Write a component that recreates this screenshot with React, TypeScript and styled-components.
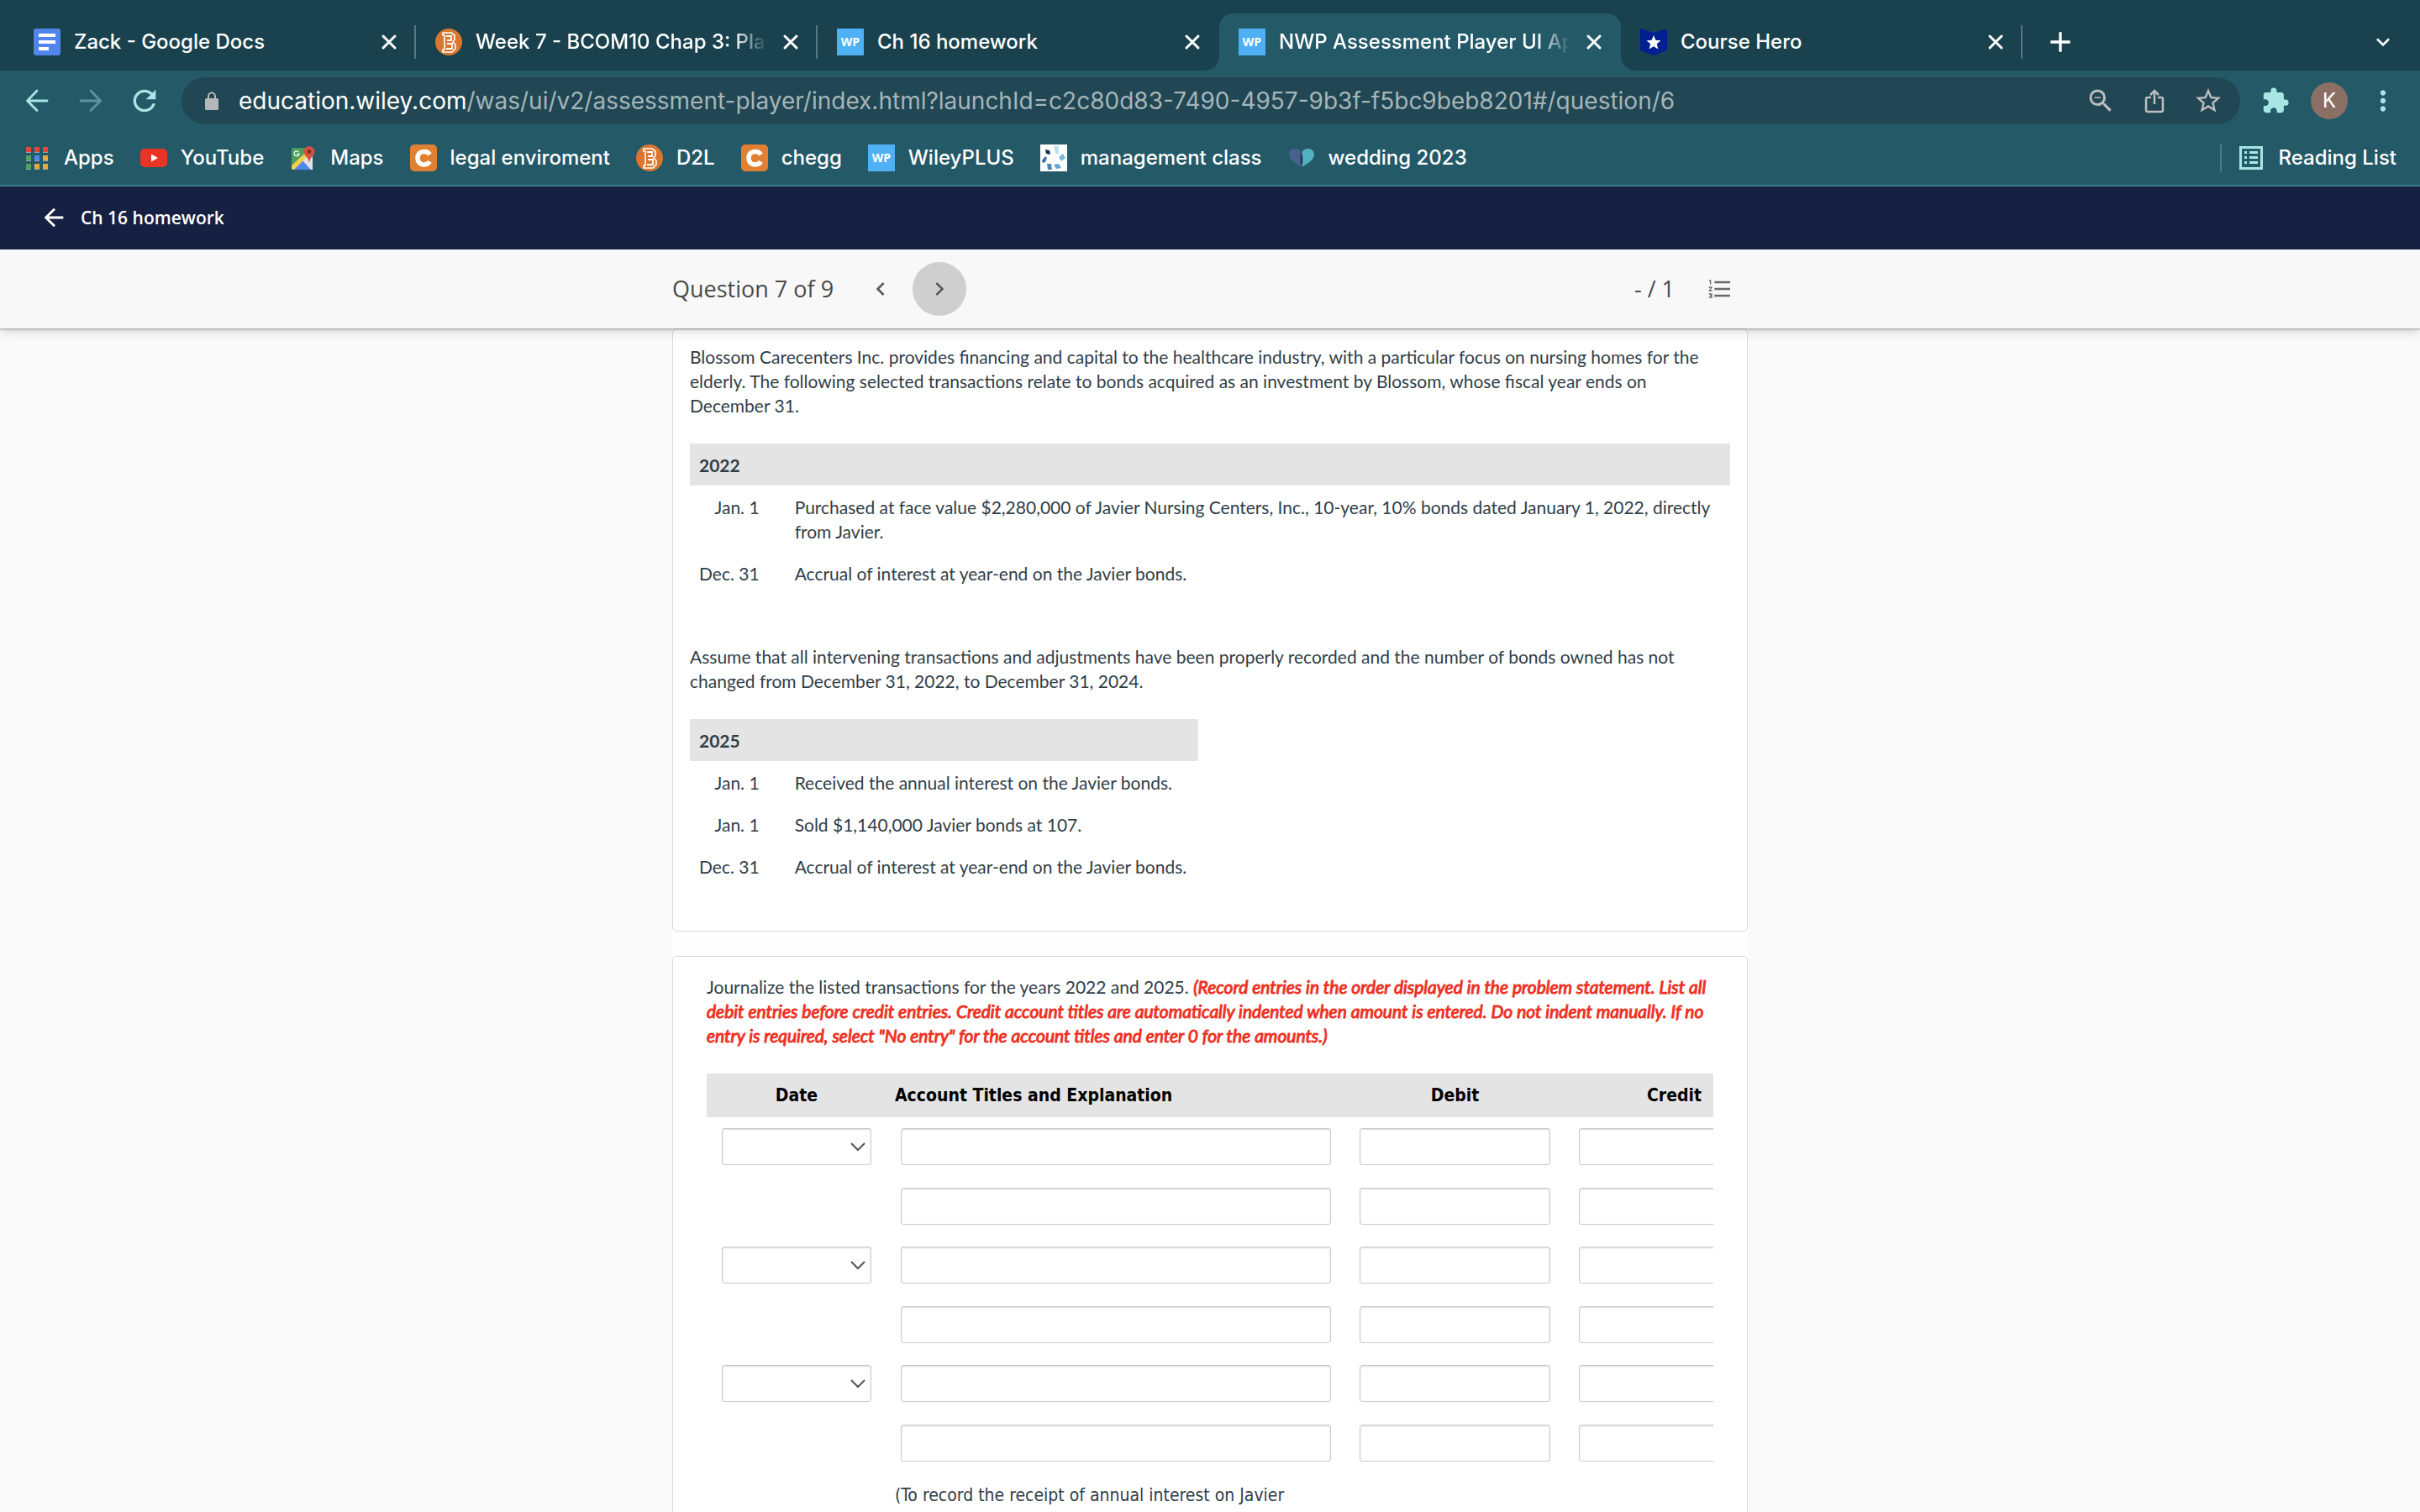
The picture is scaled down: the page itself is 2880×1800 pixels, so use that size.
import React from "react";
import styled, { createGlobalStyle, css } from "styled-components";
import {
  MdArrowBack, MdRefresh, MdZoomOut, MdStarOutline, MdExtension, MdMoreVert,
  MdFormatListNumbered, MdAdd, MdExpandMore, MdChevronLeft, MdChevronRight,
} from "react-icons/md";

const UI = `Inter, "Liberation Sans", sans-serif`;
const BODY = `Lato, "Liberation Sans", sans-serif`;
const OPEN = `"Open Sans", "Noto Sans", sans-serif`;
const TABLE = `"DejaVu Sans Condensed", "DejaVu Sans", sans-serif`;

const Global = createGlobalStyle`
  *, *::before, *::after { box-sizing: border-box; }
  body { margin: 0; background: #fafafa; }
  button, input, select { font: inherit; margin: 0; }
  p { margin: 0; }
`;

const Window = styled.div`
  display: flex;
  flex-direction: column;
  height: 100vh;
  overflow: hidden;
  background: #fafafa;
`;

/* ---------- browser chrome ---------- */

const TabStrip = styled.header`
  display: flex;
  align-items: flex-end;
  height: 84px;
  flex: none;
  padding: 0 28px 0 17px;
  background: #19424e;
  color: #fff;
  font: 500 24px/32px ${UI};
`;

const Tab = styled.div<{ $active?: boolean; $divider?: boolean }>`
  position: relative;
  display: flex;
  align-items: center;
  gap: 16px;
  width: 478px;
  height: 68px;
  padding: 0 20px 0 23px;
  border-radius: 16px 16px 0 0;
  background: ${(p) => (p.$active ? "#245968" : "transparent")};

  ${(p) =>
    p.$divider &&
    css`
      &::after {
        content: "";
        position: absolute;
        right: 0;
        top: 14px;
        width: 2px;
        height: 40px;
        background: #567680;
      }
    `}

  ${(p) =>
    p.$active &&
    css`
      &::before,
      &::after {
        content: "";
        position: absolute;
        bottom: 0;
        width: 16px;
        height: 16px;
      }
      &::before {
        left: -16px;
        background: radial-gradient(circle at 0 0, transparent 15px, #245968 16px);
      }
      &::after {
        right: -16px;
        background: radial-gradient(circle at 100% 0, transparent 15px, #245968 16px);
      }
    `}
`;

const TabTitle = styled.span<{ $long?: boolean }>`
  flex: 1;
  min-width: 0;
  overflow: hidden;
  white-space: nowrap;
  ${(p) =>
    p.$long &&
    css`
      mask-image: linear-gradient(to right, #000 calc(100% - 40px), transparent);
    `}
`;

const IconButton = styled.button<{ $size?: number; $color?: string }>`
  display: inline-flex;
  align-items: center;
  justify-content: center;
  flex: none;
  width: ${(p) => p.$size ?? 32}px;
  height: ${(p) => p.$size ?? 32}px;
  padding: 0;
  border: 0;
  border-radius: 50%;
  background: transparent;
  color: ${(p) => p.$color ?? "#fff"};
`;

const NewTab = styled.div`
  display: flex;
  align-items: center;
  justify-content: space-between;
  flex: 1;
  height: 68px;
  padding-left: 25px;
`;

const Toolbar = styled.nav`
  display: flex;
  align-items: center;
  flex: none;
  height: 72px;
  padding: 0 24px;
  background: #245968;
`;

const NavButtons = styled.div`
  display: flex;
  gap: 24px;
  padding-right: 24px;
`;

const AddressBar = styled.div`
  display: flex;
  align-items: center;
  flex: 1;
  min-width: 0;
  height: 56px;
  padding: 0 18px 0 24px;
  border-radius: 28px;
  background: #204753;
  color: #a5b5ba;
  font: 400 28px/36px ${UI};
`;

const Url = styled.span`
  flex: 1;
  min-width: 0;
  padding-left: 20px;
  overflow: hidden;
  white-space: nowrap;
  b { color: #fff; font-weight: 400; }
`;

const AddressActions = styled.div`
  display: flex;
  gap: 24px;
`;

const ToolbarEnd = styled.div`
  display: flex;
  align-items: center;
  gap: 22px;
  padding-left: 22px;
`;

const Avatar = styled.button`
  width: 44px;
  height: 44px;
  padding: 0;
  border: 0;
  border-radius: 50%;
  background: #8b6f65;
  color: #fff;
  font: 400 24px/44px ${UI};
`;

const Bookmarks = styled.nav`
  display: flex;
  align-items: center;
  gap: 31px;
  flex: none;
  height: 66px;
  padding: 0 28px;
  border-bottom: 2px solid #3f7d8a;
  background: #245968;
  font: 500 24px/32px ${UI};
`;

const Bookmark = styled.a`
  display: flex;
  align-items: center;
  gap: 16px;
  color: #fff;
  text-decoration: none;
  white-space: nowrap;
`;

const ReadingList = styled(Bookmark)`
  gap: 19px;
  margin-left: auto;
  height: 32px;
  padding-left: 21px;
  border-left: 2px solid #48808c;
`;

const Icon = styled.svg`
  display: block;
  flex: none;
`;

const DocsIcon = () => (
  <Icon width="32" height="32" viewBox="0 0 32 32">
    <rect width="32" height="32" rx="3" fill="#5086ec" />
    <path d="M6 6h20v4H6zM6 14h20v4H6zM6 22h12v4H6z" fill="#fff" />
  </Icon>
);

const BIcon = () => (
  <Icon width="32" height="32" viewBox="0 0 32 32">
    <circle cx="16" cy="16" r="16" fill="#d9772f" />
    <path d="M9 5h10l4 3v5l-2 3 3 3v5l-4 4H9v-3h2V8H9z" fill="none" stroke="#fff" strokeWidth="1.6" />
    <path d="M13 9h6v5h-5M14 18h6v6h-7" fill="none" stroke="#fff" strokeWidth="1.8" />
  </Icon>
);

const WpTile = styled.span`
  flex: none;
  width: 32px;
  height: 32px;
  background: #4fb0f5;
  color: #fff;
  font: 700 14px/32px ${OPEN};
  text-align: center;
`;

const HeroIcon = () => (
  <Icon width="32" height="32" viewBox="0 0 32 32">
    <path d="M0 0l16 5 16-5v26l-16 6-16-6z" fill="#001f91" />
    <path d="M16 8l2.400 5.800 6.100.5-4.700 4 1.500 6.200-5.300-3.300-5.300 3.300 1.500-6.200-4.700-4 6.100-.5z" fill="#fff" />
  </Icon>
);

const CloseIcon = () => (
  <Icon width="24" height="24" viewBox="0 0 24 24">
    <path d="M5 5l14 14M19 5L5 19" fill="none" stroke="currentColor" strokeWidth="3" strokeLinecap="round" />
  </Icon>
);

const BackIcon = () => (
  <Icon width="40" height="40" viewBox="0 0 40 40">
    <path d="M32 20H9M20 8L8.500 20 20 31.500" fill="none" stroke="currentColor" strokeWidth="2.800" strokeLinecap="round" strokeLinejoin="round" />
  </Icon>
);

const ForwardIcon = () => (
  <Icon width="40" height="40" viewBox="0 0 40 40">
    <path d="M8 20h23M20 8l11.500 12L20 31.500" fill="none" stroke="currentColor" strokeWidth="2.800" strokeLinecap="round" strokeLinejoin="round" />
  </Icon>
);

const LockIcon = () => (
  <Icon width="24" height="24" viewBox="0 0 24 24">
    <rect x="4" y="9" width="16" height="14" rx="1.500" fill="#b4b8bb" />
    <path d="M8 10V6.500a4 4 0 0 1 8 0V10" fill="none" stroke="#b4b8bb" strokeWidth="2" />
  </Icon>
);

const ShareIcon = () => (
  <Icon width="32" height="32" viewBox="0 0 32 32">
    <path d="M12 12H8a2 2 0 0 0-2 2v13a2 2 0 0 0 2 2h16a2 2 0 0 0 2-2V14a2 2 0 0 0-2-2h-4M16 20V5M11 9l5-5 5 5" fill="none" stroke="currentColor" strokeWidth="2.500" />
  </Icon>
);

const AppsIcon = () => (
  <Icon width="32" height="28" viewBox="0 0 32 28">
    {["#e2473d", "#e2473d", "#e2473d", "#55a05b", "#4a88ee", "#e9a83a", "#55a05b", "#e9a83a", "#e9a83a"].map((c, i) => (
      <g key={i}>
        <rect x={3 + (i % 3) * 10} y={Math.floor(i / 3) * 10 + 1} width="6" height="7" fill="#8fa5ac" />
        <rect x={3 + (i % 3) * 10} y={Math.floor(i / 3) * 10 + 1} width="6" height="6" fill={c} />
      </g>
    ))}
  </Icon>
);

const YouTubeIcon = () => (
  <Icon width="32" height="32" viewBox="0 0 32 32">
    <rect y="5" width="32" height="22" rx="5" fill="#e93323" />
    <path d="M13 11.500l8 4.500-8 4.500z" fill="#fff" />
  </Icon>
);

const MapsIcon = () => (
  <Icon width="32" height="30" viewBox="0 0 32 30">
    <path d="M4 3h23v24a2 2 0 0 1-2 2H4a2 2 0 0 1-2-2V5a2 2 0 0 1 2-2z" fill="#4d9d5b" />
    <path d="M14 17L27 8v21H10z" fill="#e2e4e6" />
    <path d="M5 29l10-11 10 11z" fill="#4f87ee" />
    <path d="M2 24L17 10l3 4L5 29H4a2 2 0 0 1-2-2z" fill="#f4cd4a" />
    <path d="M23 1a6.500 6.500 0 0 1 6.500 6.500C29.500 12 24 14 23 21c-1-7-6.500-9-6.500-13.500A6.500 6.500 0 0 1 23 1z" fill="#d8503f" />
    <circle cx="23" cy="7.500" r="2.400" fill="#7b2d24" />
    <path d="M10.500 8a3 3 0 1 0 .5 2.500H8.500" fill="none" stroke="#fff" strokeWidth="1.300" />
  </Icon>
);

const CheggIcon = () => (
  <Icon width="32" height="32" viewBox="0 0 32 32">
    <rect width="32" height="32" rx="5" fill="#e08030" />
    <path d="M23.500 12C22 9.500 20 8.500 17 8.500c-5 0-8 3-8 7.700s3 7.700 8 7.700c3 0 5-1 6.500-3.500" fill="none" stroke="#fff" strokeWidth="5.500" />
  </Icon>
);

const DotsIcon = () => (
  <Icon width="32" height="32" viewBox="0 0 32 32">
    <rect width="32" height="32" fill="#fff" />
    <path d="M16 2h6v9h-4z" fill="#bfe0f2" />
    <path d="M6 6l5 1 1 5-5-1z" fill="#16294f" />
    <path d="M22 15l5-4 3 5-5 4z" fill="#77b9df" />
    <path d="M2 19l4-5 2 2-2 5-3 1z" fill="#3f6fa8" />
    <path d="M8 23h5l1 7H9z" fill="#4d86b8" />
    <path d="M16 24l6-1 3 5-6 1z" fill="#5fa5d3" />
  </Icon>
);

const HeartIcon = () => (
  <Icon width="32" height="32" viewBox="0 0 32 32">
    <path d="M16 27C8 22 1 18 1 12c0-8 10-9 14-4 2 5 2 12 1 19z" fill="#44628a" />
    <path d="M16 27C16 20 15 13 17 8c4-5 14-4 14 4 0 6-7 10-15 15z" fill="#52b1bf" />
    <path d="M15 9c3 3 3 12 1 18-2-6-2-13-1-18z" fill="#22375c" />
  </Icon>
);

const ReadingIcon = () => (
  <Icon width="28" height="28" viewBox="0 0 28 28">
    <rect x="1.500" y="1.500" width="25" height="25" fill="none" stroke="#a8e6e6" strokeWidth="3" />
    <path d="M6 6h3v3H6zM12 6h10v3H12zM6 12h3v3H6zM12 12h10v3H12zM6 18h3v3H6zM12 18h10v3H12z" fill="#a8e6e6" />
  </Icon>
);

/* ---------- assessment page ---------- */

const CourseBar = styled.div`
  display: flex;
  align-items: center;
  flex: none;
  height: 75px;
  padding: 0 47px 2px;
  background: #162042;
`;

const CourseLink = styled.a`
  display: flex;
  align-items: center;
  gap: 15px;
  color: #fff;
  font: 600 21px/28px ${OPEN};
  text-decoration: none;
`;

const QuestionBar = styled.div`
  position: relative;
  z-index: 1;
  flex: none;
  height: 94px;
  background: #f8f8f8;
  box-shadow: 0 1px 2px rgba(0, 0, 0, 0.3), 0 3px 12px rgba(0, 0, 0, 0.18);
`;

const QuestionInner = styled.div`
  display: flex;
  align-items: center;
  max-width: 1280px;
  height: 100%;
  margin: 0 auto;
  padding-right: 9px;
  color: #4a4a4a;
  font: 400 27px/36px ${OPEN};
`;

const QuestionNav = styled.div`
  display: flex;
  gap: 6px;
  margin: 0 auto 0 24px;
`;

const RoundButton = styled(IconButton)`
  width: 64px;
  height: 64px;
  color: #5a5a5a;
  background: ${(p) => (p["aria-current"] ? "#cfcfcf" : "transparent")};
`;

const Score = styled.span`
  padding-right: 30px;
`;

const Content = styled.main`
  flex: 1;
  width: 100%;
  max-width: 1280px;
  margin: 0 auto;
  background: #fefefe;
  color: #303e48;
  font: 400 21px/29px ${BODY};
`;

const Card = styled.section<{ $inset: number }>`
  padding: ${(p) => `18px ${p.$inset}px 52px`};
  border: 1px solid #d8dada;
  border-radius: 5px;
  background: #fff;

  & + & { margin-top: 29px; padding-top: 21px; }
`;

const Events = styled.table`
  margin: 31px 0 60px;
  border-collapse: collapse;

  &:last-child { margin-bottom: 0; }
  th, td { padding: 11px 11px 10px; text-align: left; vertical-align: top; }
  thead th { background: #e4e4e4; font-weight: 700; }
  tbody th { width: 92px; font-weight: 400; text-align: right; white-space: nowrap; }
  td { padding-right: 14px; padding-left: 31px; }
`;

/* The regular italic is thickened by an outline, which keeps its narrow widths. */
const Hint = styled.em`
  color: #ee3124;
  -webkit-text-stroke: 1px #ee3124;
`;

const JournalScroll = styled.div`
  margin-top: 31px;
  overflow: hidden;
`;

const Journal = styled.table`
  width: 1282px;
  table-layout: fixed;
  border-collapse: collapse;
  font: 400 21px/28px ${TABLE};

  th, td { padding: 13px 17px 0; vertical-align: top; }
  th { height: 52px; padding: 12px 10px; background: #e4e4e4; color: #000; font-weight: 700; }
  th:nth-child(2) { text-align: left; }
  td { height: 70px; }
  td:first-child { padding: 13px 18px 0; }
  tr:nth-child(odd) td { height: 71px; }
  tr:last-child td { padding-left: 10px; }
`;

const fieldStyle = css`
  display: block;
  width: 100%;
  height: 44px;
  padding: 0 10px;
  border: 1px solid #c8cacb;
  border-radius: 3px;
  background: #fff;
  box-shadow: inset 0 1px 2px rgba(0, 0, 0, 0.14);
`;

const Field = styled.input`
  ${fieldStyle}
`;

const SelectWrap = styled.div`
  position: relative;
  svg { position: absolute; right: 7px; top: 17px; pointer-events: none; }
`;

const DateSelect = styled.select`
  ${fieldStyle}
  appearance: none;
`;

const tabs = [
  { icon: <DocsIcon />, title: "Zack - Google Docs", divider: true },
  { icon: <BIcon />, title: "Week 7 - BCOM10 Chap 3: Plan", divider: true, long: true },
  { icon: <WpTile>WP</WpTile>, title: "Ch 16 homework" },
  { icon: <WpTile>WP</WpTile>, title: "NWP Assessment Player UI App", active: true, long: true },
  { icon: <HeroIcon />, title: "Course Hero", divider: true },
];

const bookmarks = [
  { icon: <AppsIcon />, label: "Apps" },
  { icon: <YouTubeIcon />, label: "YouTube" },
  { icon: <MapsIcon />, label: "Maps" },
  { icon: <CheggIcon />, label: "legal enviroment" },
  { icon: <BIcon />, label: "D2L" },
  { icon: <CheggIcon />, label: "chegg" },
  { icon: <WpTile>WP</WpTile>, label: "WileyPLUS" },
  { icon: <DotsIcon />, label: "management class" },
  { icon: <HeartIcon />, label: "wedding 2023" },
];

function EventTable({ year, rows }: { year: string; rows: [string, string][] }) {
  return (
    <Events>
      <thead>
        <tr><th colSpan={2}>{year}</th></tr>
      </thead>
      <tbody>
        {rows.map(([date, text], i) => (
          <tr key={i}>
            <th scope="row">{date}</th>
            <td>{text}</td>
          </tr>
        ))}
      </tbody>
    </Events>
  );
}

export default function App() {
  return (
    <Window>
      <Global />
      <TabStrip>
        {tabs.map((t) => (
          <Tab key={t.title} $active={t.active} $divider={t.divider}>
            {t.icon}
            <TabTitle $long={t.long}>{t.title}</TabTitle>
            <IconButton $size={24} aria-label="Close tab"><CloseIcon /></IconButton>
          </Tab>
        ))}
        <NewTab>
          <IconButton $size={40} aria-label="New tab"><MdAdd size={40} /></IconButton>
          <IconButton aria-label="Search tabs"><MdExpandMore size={36} /></IconButton>
        </NewTab>
      </TabStrip>

      <Toolbar>
        <NavButtons>
          <IconButton $size={40} $color="#a8e6e6" aria-label="Back"><BackIcon /></IconButton>
          <IconButton $size={40} $color="#5f93a0" aria-label="Forward"><ForwardIcon /></IconButton>
          <IconButton $size={40} $color="#a8e6e6" aria-label="Reload"><MdRefresh size={40} /></IconButton>
        </NavButtons>
        <AddressBar>
          <LockIcon />
          <Url><b>education.wiley.com</b>/was/ui/v2/assessment-player/index.html?launchId=c2c80d83-7490-4957-9b3f-f5bc9beb8201#/question/6</Url>
          <AddressActions>
            <IconButton $size={40} $color="#bdbdbd" aria-label="Zoom out"><MdZoomOut size={36} /></IconButton>
            <IconButton $size={40} $color="#bdbdbd" aria-label="Share"><ShareIcon /></IconButton>
            <IconButton $size={40} $color="#bdbdbd" aria-label="Bookmark this page"><MdStarOutline size={36} /></IconButton>
          </AddressActions>
        </AddressBar>
        <ToolbarEnd>
          <IconButton $size={40} $color="#a8e6e6" aria-label="Extensions"><MdExtension size={34} /></IconButton>
          <Avatar>K</Avatar>
          <IconButton $size={40} $color="#a8e6e6" aria-label="Menu"><MdMoreVert size={38} /></IconButton>
        </ToolbarEnd>
      </Toolbar>

      <Bookmarks>
        {bookmarks.map((b) => (
          <Bookmark key={b.label} href="#">{b.icon}{b.label}</Bookmark>
        ))}
        <ReadingList href="#"><ReadingIcon />Reading List</ReadingList>
      </Bookmarks>

      <CourseBar>
        <CourseLink href="#"><MdArrowBack size={34} />Ch 16 homework</CourseLink>
      </CourseBar>

      <QuestionBar>
        <QuestionInner>
          <span>Question 7 of 9</span>
          <QuestionNav>
            <RoundButton aria-label="Previous question"><MdChevronLeft size={32} /></RoundButton>
            <RoundButton aria-label="Next question" aria-current="true"><MdChevronRight size={32} /></RoundButton>
          </QuestionNav>
          <Score>- / 1</Score>
          <IconButton $size={48} $color="#6a6a6a" aria-label="Question list"><MdFormatListNumbered size={32} /></IconButton>
        </QuestionInner>
      </QuestionBar>

      <Content>
        <Card $inset={20}>
          <p>
            Blossom Carecenters Inc. provides financing and capital to the healthcare industry, with a particular focus on nursing homes for the elderly. The following selected transactions relate to bonds acquired as an investment by Blossom, whose fiscal year ends on December 31.
          </p>
          <EventTable
            year="2022"
            rows={[
              ["Jan. 1", "Purchased at face value $2,280,000 of Javier Nursing Centers, Inc., 10-year, 10% bonds dated January 1, 2022, directly from Javier."],
              ["Dec. 31", "Accrual of interest at year-end on the Javier bonds."],
            ]}
          />
          <p>
            Assume that all intervening transactions and adjustments have been properly recorded and the number of bonds owned has not changed from December 31, 2022, to December 31, 2024.
          </p>
          <EventTable
            year="2025"
            rows={[
              ["Jan. 1", "Received the annual interest on the Javier bonds."],
              ["Jan. 1", "Sold $1,140,000 Javier bonds at 107."],
              ["Dec. 31", "Accrual of interest at year-end on the Javier bonds."],
            ]}
          />
        </Card>

        <Card $inset={40}>
          <p>
            Journalize the listed transactions for the years 2022 and 2025.{" "}
            <Hint>
              (Record entries in the order displayed in the problem statement. List all debit entries before credit entries. Credit account titles are automatically indented when amount is entered. Do not indent manually. If no entry is required, select "No entry" for the account titles and enter 0 for the amounts.)
            </Hint>
          </p>
          <JournalScroll>
            <Journal>
              <colgroup>
                <col style={{ width: 214 }} />
                <col style={{ width: 546 }} />
                <col style={{ width: 261 }} />
                <col style={{ width: 261 }} />
              </colgroup>
              <thead>
                <tr><th>Date</th><th>Account Titles and Explanation</th><th>Debit</th><th>Credit</th></tr>
              </thead>
              <tbody>
                {[0, 1, 2, 3, 4, 5].map((n) => (
                  <tr key={n}>
                    <td>
                      {n % 2 === 0 && (
                        <SelectWrap>
                          <DateSelect aria-label="Date" />
                          <Icon width="18" height="11" viewBox="0 0 18 11">
                            <path d="M1 1l8 8 8-8" fill="none" stroke="#555" strokeWidth="2" />
                          </Icon>
                        </SelectWrap>
                      )}
                    </td>
                    <td><Field aria-label="Account title" /></td>
                    <td><Field aria-label="Debit" /></td>
                    <td><Field aria-label="Credit" /></td>
                  </tr>
                ))}
                <tr>
                  <td />
                  <td>(To record the receipt of annual interest on Javier</td>
                  <td />
                  <td />
                </tr>
              </tbody>
            </Journal>
          </JournalScroll>
        </Card>
      </Content>
    </Window>
  );
}
